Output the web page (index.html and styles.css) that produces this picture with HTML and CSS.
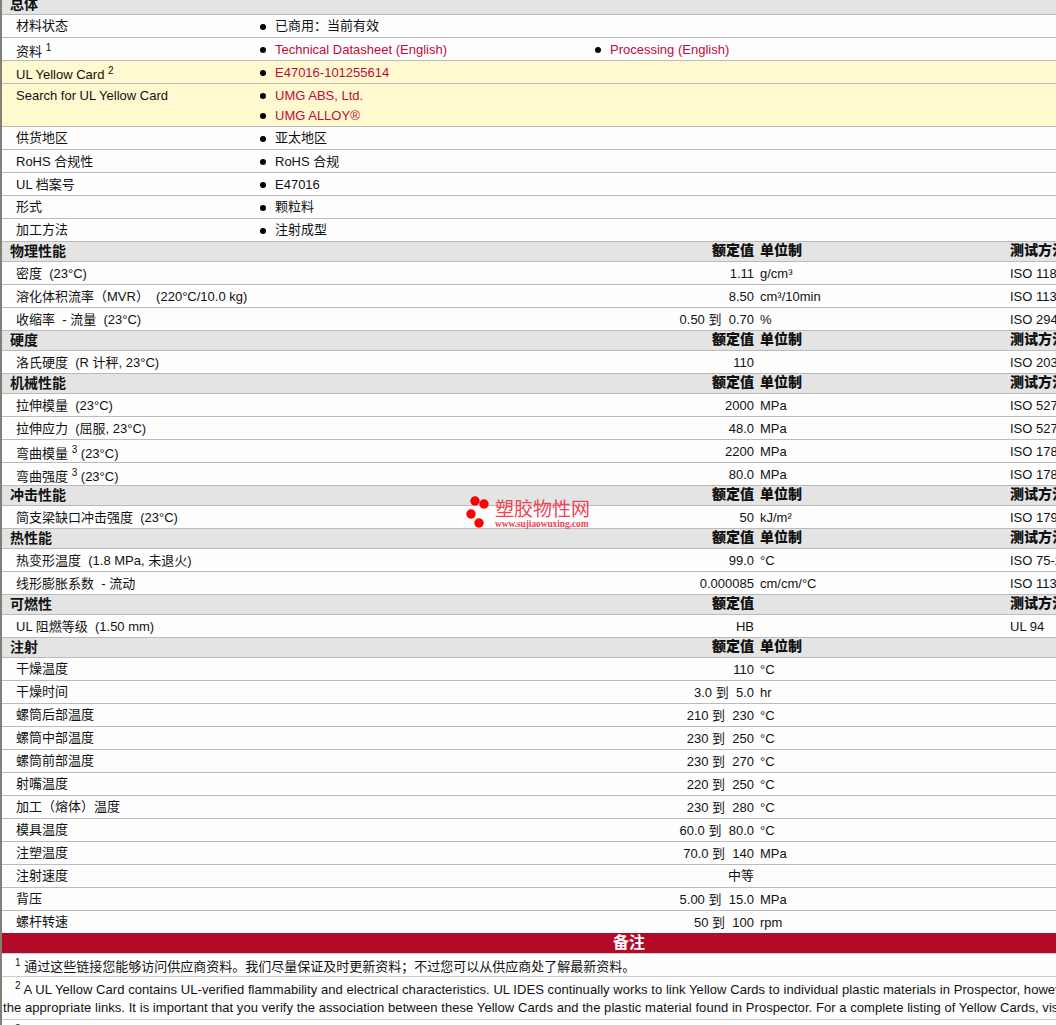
FILE: index.html
```html
<!DOCTYPE html>
<html lang="zh-CN">
<head>
<meta charset="utf-8">
<title>UL Datasheet</title>
<link rel="stylesheet" href="styles.css">
</head>
<body>
<main class="sheet">
  <div class="band"><span class="band-title">总体</span></div>
  <div class="info"><span class="label cn">材料状态</span><ul class="vals"><li class="cn">已商用：当前有效</li></ul></div>
  <div class="info"><span class="label has-sup">资料 <sup>1</sup></span><ul class="vals two"><li><a href="#">Technical Datasheet (English)</a></li><li><a href="#">Processing (English)</a></li></ul></div>
  <div class="info yellow"><span class="label has-sup">UL Yellow Card <sup>2</sup></span><ul class="vals"><li><a href="#">E47016-101255614</a></li></ul></div>
  <div class="info yellow tall"><span class="label">Search for UL Yellow Card</span><ul class="vals stack"><li><a href="#">UMG ABS, Ltd.</a></li><li><a href="#">UMG ALLOY®</a></li></ul></div>
  <div class="info"><span class="label cn">供货地区</span><ul class="vals"><li class="cn">亚太地区</li></ul></div>
  <div class="info"><span class="label">RoHS 合规性</span><ul class="vals"><li>RoHS 合规</li></ul></div>
  <div class="info"><span class="label">UL 档案号</span><ul class="vals"><li>E47016</li></ul></div>
  <div class="info"><span class="label cn">形式</span><ul class="vals"><li class="cn">颗粒料</li></ul></div>
  <div class="info"><span class="label cn">加工方法</span><ul class="vals"><li class="cn">注射成型</li></ul></div>

  <div class="band"><span class="band-title">物理性能</span><b class="val">额定值</b><b class="unit">单位制</b><b class="method">测试方法</b></div>
  <div class="row"><span class="name">密度&nbsp; (23°C)</span><span class="val">1.11</span><span class="unit">g/cm³</span><span class="method">ISO 1183</span></div>
  <div class="row"><span class="name">溶化体积流率（MVR）&nbsp; (220°C/10.0 kg)</span><span class="val">8.50</span><span class="unit">cm³/10min</span><span class="method">ISO 1133</span></div>
  <div class="row"><span class="name">收缩率&nbsp; - 流量&nbsp; (23°C)</span><span class="val">0.50 到&nbsp; 0.70</span><span class="unit">%</span><span class="method">ISO 294-4</span></div>

  <div class="band"><span class="band-title">硬度</span><b class="val">额定值</b><b class="unit">单位制</b><b class="method">测试方法</b></div>
  <div class="row"><span class="name">洛氏硬度&nbsp; (R 计秤, 23°C)</span><span class="val">110</span><span class="unit"></span><span class="method">ISO 2039-2</span></div>

  <div class="band"><span class="band-title">机械性能</span><b class="val">额定值</b><b class="unit">单位制</b><b class="method">测试方法</b></div>
  <div class="row"><span class="name">拉伸模量&nbsp; (23°C)</span><span class="val">2000</span><span class="unit">MPa</span><span class="method">ISO 527-2</span></div>
  <div class="row"><span class="name">拉伸应力&nbsp; (屈服, 23°C)</span><span class="val">48.0</span><span class="unit">MPa</span><span class="method">ISO 527-2</span></div>
  <div class="row"><span class="name has-sup">弯曲模量 <sup>3</sup> (23°C)</span><span class="val">2200</span><span class="unit">MPa</span><span class="method">ISO 178</span></div>
  <div class="row"><span class="name has-sup">弯曲强度 <sup>3</sup> (23°C)</span><span class="val">80.0</span><span class="unit">MPa</span><span class="method">ISO 178</span></div>

  <div class="band"><span class="band-title">冲击性能</span><b class="val">额定值</b><b class="unit">单位制</b><b class="method">测试方法</b></div>
  <div class="row"><span class="name">简支梁缺口冲击强度&nbsp; (23°C)</span><span class="val">50</span><span class="unit">kJ/m²</span><span class="method">ISO 179/1eA</span></div>

  <div class="band"><span class="band-title">热性能</span><b class="val">额定值</b><b class="unit">单位制</b><b class="method">测试方法</b></div>
  <div class="row"><span class="name">热变形温度&nbsp; (1.8 MPa, 未退火)</span><span class="val">99.0</span><span class="unit">°C</span><span class="method">ISO 75-2/A</span></div>
  <div class="row"><span class="name">线形膨胀系数&nbsp; - 流动</span><span class="val">0.000085</span><span class="unit">cm/cm/°C</span><span class="method">ISO 11359-2</span></div>

  <div class="band"><span class="band-title">可燃性</span><b class="val">额定值</b><b class="unit"></b><b class="method">测试方法</b></div>
  <div class="row"><span class="name">UL 阻燃等级&nbsp; (1.50 mm)</span><span class="val">HB</span><span class="unit"></span><span class="method">UL 94</span></div>

  <div class="band"><span class="band-title">注射</span><b class="val">额定值</b><b class="unit">单位制</b><b class="method"></b></div>
  <div class="row"><span class="name cn">干燥温度</span><span class="val">110</span><span class="unit">°C</span></div>
  <div class="row"><span class="name cn">干燥时间</span><span class="val">3.0 到&nbsp; 5.0</span><span class="unit">hr</span></div>
  <div class="row"><span class="name cn">螺筒后部温度</span><span class="val">210 到&nbsp; 230</span><span class="unit">°C</span></div>
  <div class="row"><span class="name cn">螺筒中部温度</span><span class="val">230 到&nbsp; 250</span><span class="unit">°C</span></div>
  <div class="row"><span class="name cn">螺筒前部温度</span><span class="val">230 到&nbsp; 270</span><span class="unit">°C</span></div>
  <div class="row"><span class="name cn">射嘴温度</span><span class="val">220 到&nbsp; 250</span><span class="unit">°C</span></div>
  <div class="row"><span class="name cn">加工（熔体）温度</span><span class="val">230 到&nbsp; 280</span><span class="unit">°C</span></div>
  <div class="row"><span class="name cn">模具温度</span><span class="val">60.0 到&nbsp; 80.0</span><span class="unit">°C</span></div>
  <div class="row"><span class="name cn">注塑温度</span><span class="val">70.0 到&nbsp; 140</span><span class="unit">MPa</span></div>
  <div class="row"><span class="name cn">注射速度</span><span class="val cn">中等</span><span class="unit"></span></div>
  <div class="row"><span class="name cn">背压</span><span class="val">5.00 到&nbsp; 15.0</span><span class="unit">MPa</span></div>
  <div class="row last"><span class="name cn">螺杆转速</span><span class="val">50 到&nbsp; 100</span><span class="unit">rpm</span></div>

  <h2 class="notes-head">备注</h2>
  <p class="note"><sup>1</sup> 通过这些链接您能够访问供应商资料。我们尽量保证及时更新资料；不过您可以从供应商处了解最新资料。</p>
  <p class="note note-long"><sup>2</sup> A UL Yellow Card contains UL-verified flammability and electrical characteristics. UL IDES continually works to link Yellow Cards to individual plastic materials in Prospector, however this list may not include all of<br><span class="cont">the appropriate links. It is important that you verify the association between these Yellow Cards and the plastic material found in Prospector. For a complete listing of Yellow Cards, visit the UL Yellow Card Search.</span></p>
  <p class="note"><sup>3</sup> 一般属性：这些不能被视为规格。</p>
</main>
<div class="logo">
  <svg class="logo-mark" width="28" height="36" viewBox="0 0 28 36"><circle cx="10" cy="7" r="4.7"/><circle cx="19" cy="10" r="4.7"/><circle cx="6" cy="20" r="4.7"/><circle cx="14" cy="29" r="4.7"/></svg>
  <div class="logo-text"><span class="logo-cn">塑胶物性网</span><span class="logo-url">www.sujiaowuxing.com</span></div>
</div>
</body>
</html>
```

FILE: styles.css
```css
html, body { margin: 0; padding: 0; overflow: hidden; height: 1025px; background: #fefefe; }
body { position: relative; font-family: "Liberation Sans", "Noto Sans CJK SC", sans-serif; font-size: 13px; color: #111; }
.sheet { width: 1256px; margin-top: -5px; border-left: 2px solid #808078; box-sizing: border-box; }

.band, .row { display: grid; grid-template-columns: 8px 600px 144px 6px 250px 1fr; box-sizing: border-box; border-bottom: 1px solid #bbb; white-space: nowrap; }
.band { height: 20px; background: #e4e4e4; font-size: 14px; line-height: 18px; font-weight: 700; }
.band b { line-height: 16px; }
.band-title { grid-column: 1 / 3; padding-left: 8px; font-weight: 700; }
.row { height: 23px; line-height: 23px; }
.row.last { height: 22px; border-bottom: 0; }
.name { grid-column: 1 / 3; padding-left: 14px; }
.val { grid-column: 3; text-align: right; }
.unit { grid-column: 5; }
.method { grid-column: 6; }
.row .cn, .info .cn { line-height: 21px; }
.label.has-sup, .name.has-sup { padding-top: 2px; }

.info { display: flex; height: 23px; box-sizing: border-box; border-bottom: 1px solid #bbb; line-height: 23px; white-space: nowrap; }
.info.yellow { background: #fff9d0; }
.info.tall { height: 43px; }
.label { width: 258px; padding-left: 14px; box-sizing: border-box; flex: none; }
.vals { margin: 0; padding: 0; list-style: none; }
.vals.two { display: flex; }
.vals.two li { width: 320px; }
.vals.stack li { height: 20px; line-height: 23px; }
.vals li { position: relative; padding-left: 15px; }
.vals li::before { content: ""; position: absolute; left: 0; top: 9px; width: 6px; height: 6px; border-radius: 50%; background: #000; }
a { color: #c00a3c; text-decoration: none; }
sup { font-size: 10px; line-height: 0; vertical-align: 5px; }

.notes-head { margin: 0; height: 21px; box-sizing: border-box; background: #b30a27; border-bottom: 1px solid #ccc; color: #fff; font-size: 16px; line-height: 19px; text-align: center; }
.note { margin: 0; padding: 4px 0 0 13px; line-height: 18px; border-bottom: 1px solid #ccc; white-space: nowrap; }
.note-long { padding-bottom: 2px; letter-spacing: .06px; }
.cont { margin-left: -12px; }

.logo { position: absolute; left: 465px; top: 494px; display: flex; gap: 2px; color: #ee4455; }
.logo-mark { fill: #f00; }
.logo-text { display: flex; flex-direction: column; padding-top: 6px; }
.logo-cn { font-size: 19px; line-height: 20px; white-space: nowrap; }
.logo-url { font-family: "Liberation Serif", serif; font-size: 9.3px; line-height: 9px; font-weight: 700; white-space: nowrap; }
```
